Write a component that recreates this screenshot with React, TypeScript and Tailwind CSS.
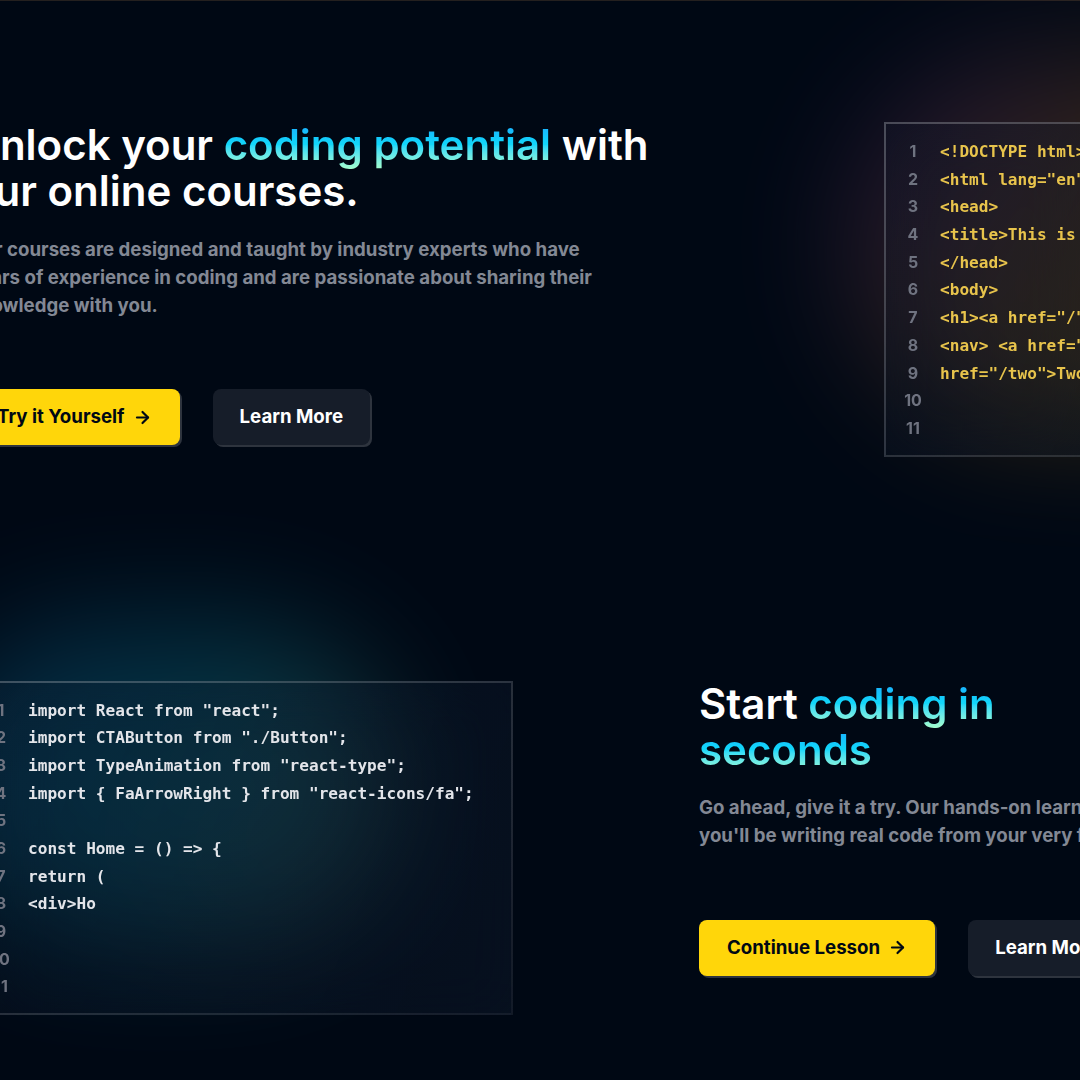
import { ArrowRight } from "lucide-react";

const htmlLines = [
  "<!DOCTYPE html>",
  '<html lang="en">',
  "<head>",
  "<title>This is myPage</title>",
  "</head>",
  "<body>",
  '<h1><a href="/">Header</a></h1>',
  '<nav> <a href="/one">One</a> <a',
  'href="/two">Two</a> <a',
  "",
  "",
];

const reactLines = [
  'import React from "react";',
  'import CTAButton from "./Button";',
  'import TypeAnimation from "react-type";',
  'import { FaArrowRight } from "react-icons/fa";',
  "",
  "const Home = () => {",
  "return (",
  "<div>Ho",
  "",
  "",
  "",
];

function CodeBox({ lines, codeColor, glow }: { lines: string[]; codeColor: string; glow: "warm" | "cool" }) {
  return (
    <div className="relative w-[541px] shrink-0">
      {glow === "warm" ? (
        <div className="absolute left-[-40px] top-[-70px] h-[380px] w-[520px] rounded-full bg-[linear-gradient(123.77deg,#8a2be2_-6.46%,#ffa500_59.04%,#f8f8ff_124.53%)] opacity-20 blur-[60px]" />
      ) : (
        <div className="absolute left-[-40px] top-[-60px] h-[320px] w-[460px] rounded-full bg-[linear-gradient(118.19deg,#1fa2ff_-3.62%,#12d8fa_50.44%,#a6ffcb_104.51%)] opacity-20 blur-[60px]" />
      )}
      <div className="relative flex border-2 border-solid [border-image:linear-gradient(to_right_bottom,rgba(255,255,255,0.24),rgba(255,255,255,0.06))_1] bg-[linear-gradient(111.93deg,rgba(14,26,45,0.24)_-1.4%,rgba(17,30,50,0.38)_104.96%)] pb-[12px] pt-[14px] backdrop-blur-[26px]">
        <div className="flex w-[54px] shrink-0 flex-col text-center font-['Inter',sans-serif] text-base font-bold text-[#6f7380]">
          {lines.map((_, i) => (
            <span key={i} className="h-[27.7px] leading-[27.7px]">
              {i + 1}
            </span>
          ))}
        </div>
        <div className={`flex flex-col font-['DejaVu_Sans_Mono','Liberation_Mono',monospace] text-[16.1px] font-bold ${codeColor}`}>
          {lines.map((l, i) => (
            <span key={i} className="h-[27.7px] whitespace-pre leading-[27.7px]">
              {l}
            </span>
          ))}
        </div>
      </div>
    </div>
  );
}

function Buttons({ primary }: { primary: string }) {
  return (
    <div className="flex gap-[33px] font-['Inter',sans-serif] text-[18.67px] font-bold">
      <button className="flex items-center gap-2 rounded-lg bg-[#FFD60A] px-[28px] py-4 leading-6 text-[#000814] shadow-[2px_2px_0px_0px_rgba(255,255,255,0.18)]">
        {primary}
        <ArrowRight size={19} strokeWidth={2.75} />
      </button>
      <button className="rounded-lg bg-[#161D29] px-[27px] py-4 leading-6 text-white shadow-[2px_2px_0px_0px_rgba(255,255,255,0.18)]">
        Learn More
      </button>
    </div>
  );
}

export default function App() {
  return (
    <div className="relative h-[1080px] w-[1080px] overflow-hidden bg-[#000814] font-['Inter',sans-serif]">
      <div className="h-px bg-[#24201f]" />
      <div className="ml-[-28px] w-[1500px]">
        <section className="flex items-start pt-[121px]">
          <div className="ml-[-3px] flex w-[740px] shrink-0 flex-col">
            <h1 className="text-[42px] font-semibold leading-[46px] text-white">
              Unlock your{" "}
              <span className="bg-linear-to-b from-[#1FA2FF] via-[#12D8FA] to-[#A6FFCB] bg-clip-text text-transparent">
                coding potential
              </span>{" "}
              with our online courses.
            </h1>
            <p className="mt-[22px] w-[629px] text-[18.67px] font-bold leading-7 text-[#838894]">
              Our courses are designed and taught by industry experts who have years of experience in coding and are passionate about sharing their knowledge with you.
            </p>
            <div className="mt-[69px]">
              <Buttons primary="Try it Yourself" />
            </div>
          </div>
          <div className="ml-[175px]">
            <CodeBox lines={htmlLines} codeColor="text-[#E8C44C]" glow="warm" />
          </div>
        </section>

        <section className="mt-[224px] flex items-start">
          <CodeBox lines={reactLines} codeColor="text-[#E3E5EA]" glow="cool" />
          <div className="ml-[186px] flex w-[740px] shrink-0 flex-col">
            <h2 className="w-[360px] text-[42px] font-semibold leading-[46px] text-white">
              Start{" "}
              <span className="bg-linear-to-b from-[#1FA2FF] via-[#12D8FA] to-[#A6FFCB] bg-clip-text text-transparent">
                coding in seconds
              </span>
            </h2>
            <p className="mt-[21px] w-[600px] text-[18.67px] font-bold leading-7 text-[#838894]">
              Go ahead, give it a try. Our hands-on learning environment means you'll be writing real code from your very first lesson.
            </p>
            <div className="mt-[70px]">
              <Buttons primary="Continue Lesson" />
            </div>
          </div>
        </section>
      </div>
    </div>
  );
}
